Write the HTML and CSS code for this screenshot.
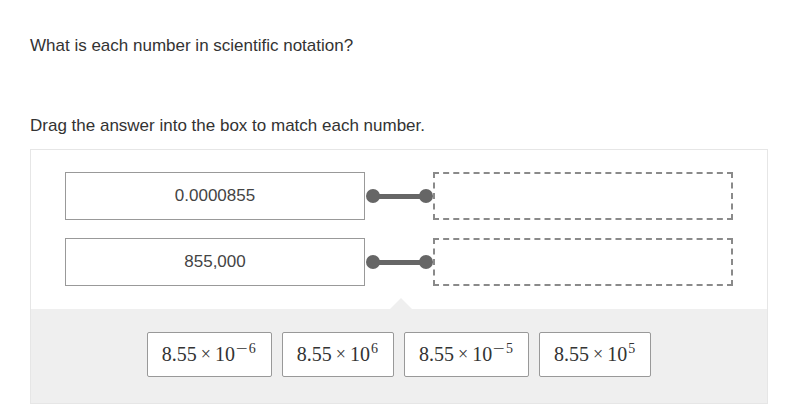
FILE: index.html
```html
<!DOCTYPE html>
<html>
<head>
<meta charset="utf-8">
<link rel="stylesheet" href="styles.css">
</head>
<body>
<p class="prompt first">What is each number in scientific notation?</p>
<p class="prompt second">Drag the answer into the box to match each number.</p>
<div class="panel">
  <div class="rows">
    <div class="row">
      <div class="term">0.0000855</div>
      <div class="link"><span class="dot"></span><span class="bar"></span><span class="dot"></span></div>
      <div class="drop"></div>
    </div>
    <div class="row">
      <div class="term">855,000</div>
      <div class="link"><span class="dot"></span><span class="bar"></span><span class="dot"></span></div>
      <div class="drop"></div>
    </div>
  </div>
  <div class="tray">
    <div class="tile"><span>8.55</span><span class="times">×</span><span>10</span><sup><span class="minus">−</span>6</sup></div>
    <div class="tile"><span>8.55</span><span class="times">×</span><span>10</span><sup>6</sup></div>
    <div class="tile"><span>8.55</span><span class="times">×</span><span>10</span><sup><span class="minus">−</span>5</sup></div>
    <div class="tile"><span>8.55</span><span class="times">×</span><span>10</span><sup>5</sup></div>
  </div>
</div>
</body>
</html>
```
FILE: styles.css
```css
html, body {
  margin: 0;
  padding: 0;
  background: #ffffff;
}
body {
  font-family: "Liberation Sans", Arial, sans-serif;
  color: #333333;
  width: 796px;
  height: 412px;
  overflow: hidden;
}
.prompt {
  margin: 0;
  font-size: 17px;
  line-height: 20px;
  padding-left: 30px;
}
.first {
  padding-top: 36px;
}
.second {
  padding-top: 60px;
}
.panel {
  margin: 13px 0 0 30px;
  width: 736px;
  border: 1px solid #e6e6e6;
  display: flex;
  flex-direction: column;
}
.rows {
  display: flex;
  flex-direction: column;
  gap: 18px;
  padding: 22px 0 23px 34px;
}
.row {
  display: flex;
  align-items: center;
  height: 48px;
}
.term {
  box-sizing: border-box;
  width: 300px;
  height: 48px;
  border: 1px solid #999999;
  display: flex;
  align-items: center;
  justify-content: center;
  font-size: 17px;
  color: #444444;
}
.link {
  width: 68px;
  display: flex;
  align-items: center;
  padding: 0 0 0 1px;
  box-sizing: border-box;
}
.dot {
  width: 14px;
  height: 14px;
  border-radius: 50%;
  background: #666666;
  flex: none;
}
.bar {
  flex: 1;
  height: 5px;
  background: #666666;
  margin: 0 -2px;
}
.drop {
  box-sizing: border-box;
  width: 300px;
  height: 48px;
  border: 2px dashed #8a8a8a;
}
.tray {
  position: relative;
  background: #efefef;
  display: flex;
  justify-content: center;
  gap: 10px;
  padding: 23px 0 26px 0;
}
.tray::before {
  content: "";
  position: absolute;
  left: 359px;
  top: -11px;
  border-left: 11px solid transparent;
  border-right: 11px solid transparent;
  border-bottom: 11px solid #efefef;
}
.tile {
  box-sizing: border-box;
  height: 45px;
  padding: 0 15px 0 14px;
  background: #ffffff;
  border: 1px solid #999999;
  border-radius: 2px;
  display: flex;
  align-items: center;
  font-family: "Liberation Serif", "Times New Roman", serif;
  font-size: 20px;
  color: #333333;
  white-space: nowrap;
}
.times {
  font-size: 18px;
  margin: 0 4px;
}
.tile sup {
  font-size: 14px;
  line-height: 1;
  position: relative;
  top: -6px;
  margin-left: 1px;
}
.minus {
  display: inline-block;
  transform: scaleX(1.5);
  margin: 0 3px 0 2px;
}
```
